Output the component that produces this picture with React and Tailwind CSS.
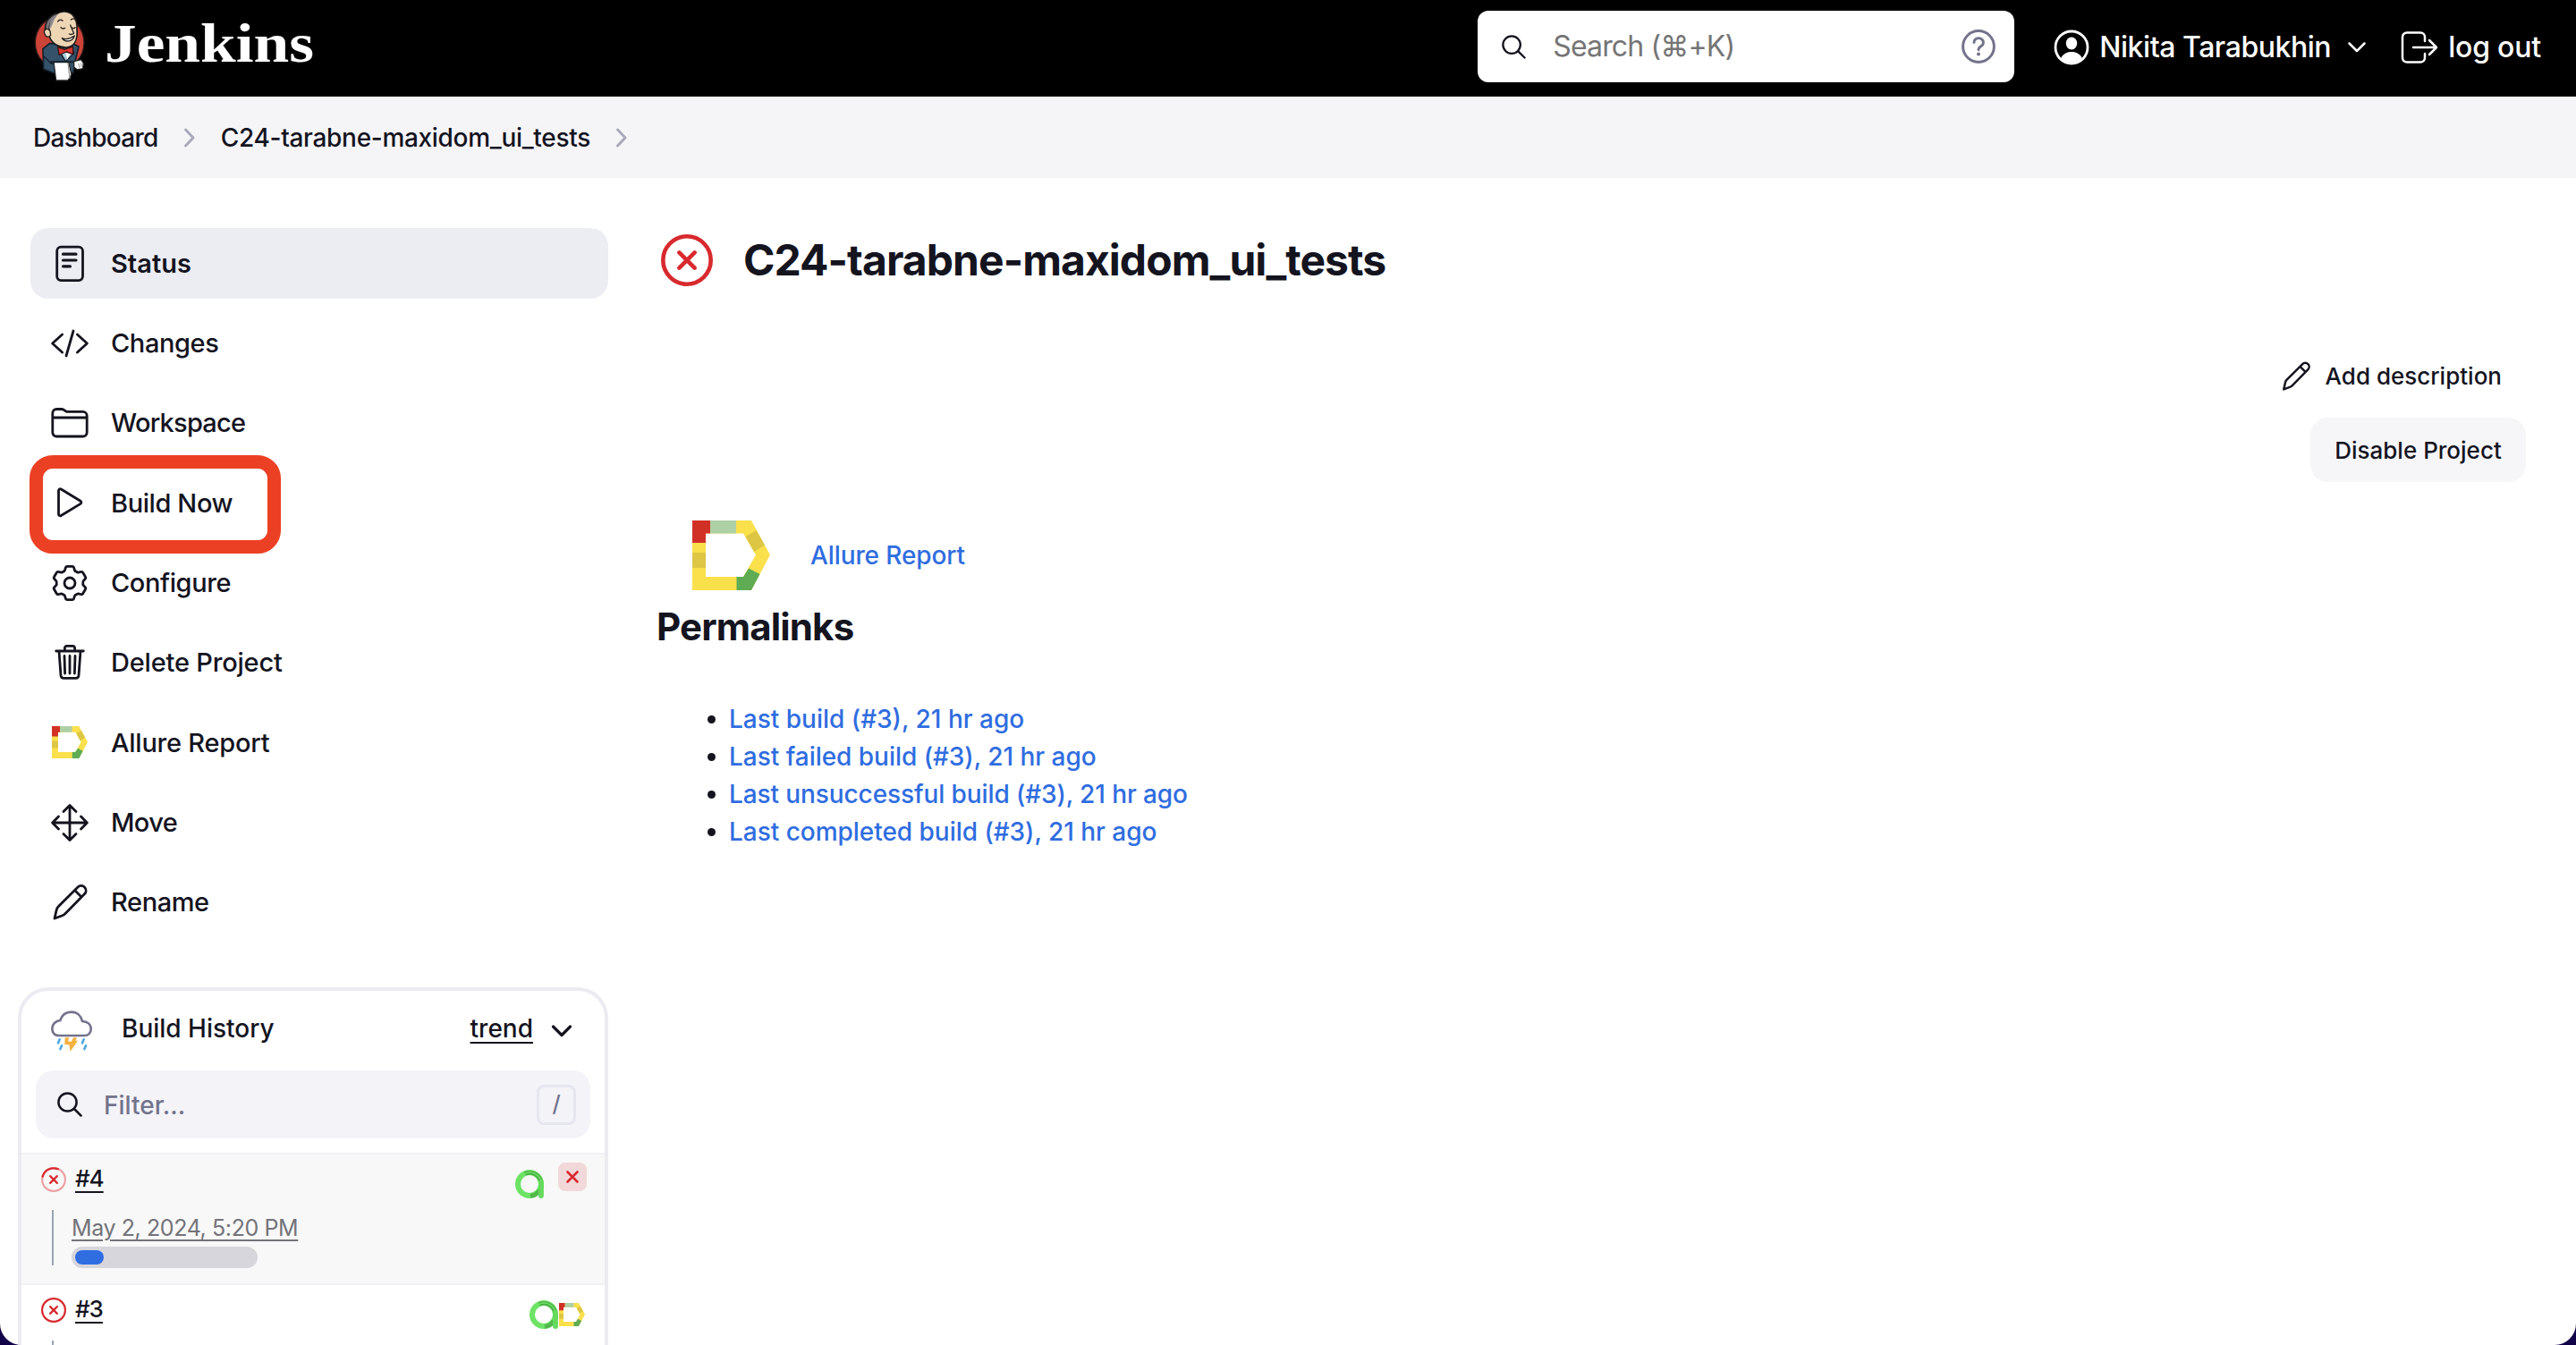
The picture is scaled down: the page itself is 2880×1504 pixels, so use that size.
import React from "react";

function Svg({ w, h, box, children, className = "" }) {
  return (
    <svg
      width={w}
      height={h}
      viewBox={box || `0 0 ${w} ${h}`}
      fill="none"
      stroke="currentColor"
      strokeWidth="2.8"
      strokeLinecap="round"
      strokeLinejoin="round"
      className={`block shrink-0 ${className}`}
    >
      {children}
    </svg>
  );
}

function Butler() {
  return (
    <svg width="100" height="100" viewBox="0 0 300 300" className="block shrink-0" strokeLinejoin="round" strokeLinecap="round">
      <ellipse cx="140" cy="143" rx="82" ry="88" fill="#cc4338" stroke="#2a1a1a" strokeWidth="4" />
      <path d="M106 146 L84 164 L86 232 L122 246 L186 244 L192 206 L204 156 L186 148 Z" fill="#34536b" stroke="#15202a" strokeWidth="5" />
      <path d="M88 190 L112 214 L130 208" fill="none" stroke="#15202a" strokeWidth="4" />
      <path d="M140 172 L160 206 L188 178 L180 158 Z" fill="#a9cbdc" stroke="#15202a" strokeWidth="4" />
      <path d="M160 176 L166 200 L176 176 Z" fill="#fff" />
      <path d="M94 112 C86 84 98 58 128 44 L134 60 L112 92 L108 118 Z" fill="#77757a" stroke="#1c1c1c" strokeWidth="5" />
      <path d="M104 118 C102 74 124 38 156 39 C186 40 200 66 198 98 C201 132 190 156 164 159 C138 160 112 146 106 122 Z" fill="#eed6b5" stroke="#1c1c1c" strokeWidth="5" />
      <path d="M108 74 C112 58 122 50 134 47 L122 66 L112 90 L104 98 Z" fill="#8a878a" />
      <path d="M108 104 C98 90 84 100 90 114 C94 126 104 126 110 118 Z" fill="#eed6b5" stroke="#1c1c1c" strokeWidth="4" />
      <path d="M134 72 Q142 62 150 70 M178 66 Q188 58 194 68 M144 92 Q150 99 158 94 M180 92 Q186 98 192 92 M176 84 Q184 104 188 112 Q180 118 172 114" fill="none" stroke="#2b2320" strokeWidth="4" />
      <path d="M148 128 Q168 136 190 120 Q184 138 166 138 Q154 138 148 128 Z" fill="#fff" stroke="#2b2320" strokeWidth="4" />
      <path d="M134 158 L156 166 L184 156 L186 182 L162 174 L138 184 Z" fill="#d8342f" stroke="#3a1212" strokeWidth="4" />
      <path d="M120 208 L170 208 L180 250 L168 270 L128 270 Z" fill="#fff" stroke="#222" strokeWidth="4" />
      <path d="M168 210 L174 262" stroke="#999" strokeWidth="4" />
      <path d="M112 208 L184 208" stroke="#15202a" strokeWidth="6" />
      <path d="M188 206 L212 200 L220 212 L218 230 L200 234 L188 226 Z" fill="#fff" stroke="#222" strokeWidth="4" />
      <path d="M204 214 L206 226 M212 212 L213 224" stroke="#999" strokeWidth="3" />
    </svg>
  );
}

function AllureD({ w, h }) {
  return (
    <svg width={w} height={h} viewBox="0 0 87 78" preserveAspectRatio="none" className="block shrink-0">
      <path d="M0 0 H66 L87 38.5 L66 78 H0 Z M15 14.5 V63 H57 L71 38.5 L57 14.5 Z" fill="#fae04b" fillRule="evenodd" />
      <path d="M0 0 H20 V14.5 H15 V25 H0 Z" fill="#d13027" />
      <path d="M20 0 H49 V14.5 H20 Z" fill="#aed0a6" />
      <path d="M0 36 H15 V53 H0 Z M59.5 18 L71.5 11 L81 27.5 L69 35 Z" fill="#dec645" />
      <path d="M49.5 63 H57 L63 53.5 L75.5 60 L66 78 H49.5 Z" fill="#5fac55" />
    </svg>
  );
}

function AllureA() {
  return (
    <svg width="32" height="32" viewBox="0 0 32 32" fill="none" className="block shrink-0">
      <circle cx="16" cy="16" r="13" stroke="#6de365" strokeWidth="6" />
      <path d="M11 4.5 A13 13 0 0 1 28.4 12" stroke="#4aab45" strokeWidth="4.4" />
      <path d="M17 29.4 A13 13 0 0 0 27 23" stroke="#51b84b" strokeWidth="4.6" />
      <path d="M9 5.6 A12.6 12.6 0 0 1 29 16" stroke="#6de365" strokeWidth="1.6" />
      <path d="M29 14 V29" stroke="#65da5d" strokeWidth="5.8" strokeLinecap="round" />
    </svg>
  );
}

const polar = (r, deg) => {
  const a = (deg * Math.PI) / 180;
  return `${(24 + r * Math.cos(a)).toFixed(2)} ${(24 + r * Math.sin(a)).toFixed(2)}`;
};
// Six flat teeth joined by shallow rounded notches.
const gearPath =
  [0, 1, 2, 3, 4, 5]
    .map((k) => {
      const c = -90 + k * 60;
      return `${k ? "L" : "M"}${polar(17.4, c - 16)} Q${polar(19.2, c - 13)} ${polar(18.8, c - 8)} L${polar(18.8, c + 8)} Q${polar(19.2, c + 13)} ${polar(17.4, c + 16)} L${polar(16, c + 19)} Q${polar(14.2, c + 24)} ${polar(14.8, c + 30)} Q${polar(14.2, c + 36)} ${polar(16, c + 41)}`;
    })
    .join(" ") + "Z";

const icons = {
  status: (
    <Svg w={48} h={48}>
      <rect x="9.7" y="5.2" width="28.8" height="37.4" rx="4.5" />
      <path d="M16.5 13.2 H31 M16.5 20 H31 M16.5 26.8 H24.5" strokeWidth="3.2" />
    </Svg>
  ),
  changes: (
    <Svg w={48} h={48}>
      <path d="M15.6 14 L4.6 24 L15.6 34 M32.4 14 L43.4 24 L32.4 34 M28 10 L20 38" />
    </Svg>
  ),
  workspace: (
    <Svg w={48} h={48}>
      <path d="M4.8 13 a4.5 4.5 0 0 1 4.5-4.5 H14.6 a5 5 0 0 1 3 1 l1.8 1.2 a5 5 0 0 0 2.6 .7 H38.7 a4.5 4.5 0 0 1 4.5 4.5 V34.5 a4.5 4.5 0 0 1-4.5 4.5 H9.3 a4.5 4.5 0 0 1-4.5-4.5 Z M4.8 18 H43.2" />
    </Svg>
  ),
  build: (
    <Svg w={48} h={48}>
      <path d="M11.5 10.5 V37 a1.8 1.8 0 0 0 2.8 1.5 L36 25.4 a1.9 1.9 0 0 0 0-3.2 L14.3 9 a1.8 1.8 0 0 0-2.8 1.5 Z" />
    </Svg>
  ),
  configure: (
    <Svg w={48} h={48}>
      <path d={gearPath} />
      <circle cx="24" cy="24" r="6" />
    </Svg>
  ),
  trash: (
    <Svg w={48} h={48}>
      <path d="M12 11 L14 38.4 a3.4 3.4 0 0 0 3.3 3 H30.7 a3.4 3.4 0 0 0 3.3-3 L36 11 M8.7 11 H39.3 M18.4 11 V7.6 a2.2 2.2 0 0 1 2.2-2.2 H27.4 a2.2 2.2 0 0 1 2.2 2.2 V11 M24 16.5 V36 M18 16.5 L18.6 36 M30 16.5 L29.4 36" />
    </Svg>
  ),
  allure: (
    <div className="flex h-12 w-12 items-center pl-1">
      <AllureD w={40} h={36} />
    </div>
  ),
  move: (
    <Svg w={48} h={48}>
      <path d="M24 5 V43 M5 24 H43 M17 11.5 L24 4.6 L31 11.5 M17 36.5 L24 43.4 L31 36.5 M11.5 17 L4.6 24 L11.5 31 M36.5 17 L43.4 24 L36.5 31" />
    </Svg>
  ),
  pencil: (
    <Svg w={48} h={48}>
      <path d="M7 42 L9.2 32.4 a8 8 0 0 1 2-3.6 L33 7 a5.3 5.3 0 0 1 7.5 0 L40.6 7.2 a5.3 5.3 0 0 1 0 7.4 L18.8 36.8 a8 8 0 0 1-3.6 2.2 Z M29.6 10.6 L37 18" />
    </Svg>
  ),
};

const nav = [
  ["status", "Status", "font-semibold bg-[#ecedf3]"],
  ["changes", "Changes", "font-medium tracking-[-0.4px]"],
  ["workspace", "Workspace", "font-medium tracking-[-0.75px]"],
  ["build", "Build Now", "font-medium tracking-[-0.4px]"],
  ["configure", "Configure", "font-medium tracking-[-0.4px]"],
  ["trash", "Delete Project", "font-medium tracking-[-0.2px]"],
  ["allure", "Allure Report", "font-medium tracking-[-0.25px]"],
  ["move", "Move", "font-medium tracking-[-0.6px]"],
  ["pencil", "Rename", "font-medium tracking-[-0.4px]"],
];

function Search({ size, sw }) {
  return (
    <Svg w={size} h={size} box="0 0 28 28">
      <g strokeWidth={sw}>
        <circle cx="11.5" cy="11.5" r="10.1" />
        <path d="M19 19 L26.5 26.5" />
      </g>
    </Svg>
  );
}

function Failed({ size, sw, cross, running }) {
  return (
    <svg width={size} height={size} viewBox="0 0 58 58" fill="none" stroke="#d82a2e" strokeWidth={sw} strokeLinecap="round" className="block shrink-0">
      <circle cx="29" cy="29" r={29 - sw / 2} opacity={running ? 0.42 : 1} />
      {running && <path d="M3.6 22 A26.4 26.4 0 0 1 39 4.7" />}
      <path d={`M${29 - cross} ${29 - cross} L${29 + cross} ${29 + cross} M${29 + cross} ${29 - cross} L${29 - cross} ${29 + cross}`} />
    </svg>
  );
}

function Chevron() {
  return (
    <Svg w={14} h={24} className="text-[#a9a9bb]">
      <path d="M2.5 3 L11 12 L2.5 21" strokeWidth="3" />
    </Svg>
  );
}

function Header() {
  return (
    <header className="flex h-[108px] items-center bg-black pl-5 text-white">
      <div className="-mt-2">
        <Butler />
      </div>
      <span className="-ml-[3px] -mt-3 inline-block origin-left scale-x-[1.17] font-['Liberation_Serif',serif] text-[61px] leading-none font-bold">
        Jenkins
      </span>
      <div className="ml-auto -mt-1 flex h-20 w-[600px] items-center rounded-xl bg-white pl-[27px] pr-5 text-[#14141f]">
        <Search size={27} sw={2.4} />
        <span className="ml-[30px] text-[32px] tracking-[-0.85px] text-[#757575]">Search (⌘+K)</span>
        <Svg w={40} h={40} className="ml-auto text-[#73738c]">
          <circle cx="20" cy="20" r="17.4" strokeWidth="3" />
          <path d="M15 15.5 a5.2 4.8 0 1 1 8 4 c-2 1.3-3 2.2-3 4.2" strokeWidth="2.9" />
          <circle cx="20" cy="28.4" r="2" fill="currentColor" stroke="none" />
        </Svg>
      </div>
      <div className="-mt-0.5 ml-11 flex items-center">
        <Svg w={40} h={40}>
          <circle cx="20" cy="20" r="18" strokeWidth="2.8" />
          <ellipse cx="20" cy="15.5" rx="6.2" ry="7" fill="currentColor" stroke="none" />
          <path d="M8 32.5 C10 27.5 14.5 25 20 25 C25.5 25 30 27.5 32 32.5 A18 18 0 0 1 8 32.5 Z" fill="currentColor" stroke="none" />
        </Svg>
        <span className="ml-[11px] text-[32px] font-medium tracking-[-0.45px]">Nikita Tarabukhin</span>
        <Svg w={22} h={14} className="ml-[18px]">
          <path d="M2.5 2.5 L11 11 L19.5 2.5" strokeWidth="2.5" />
        </Svg>
      </div>
      <div className="-mt-0.5 ml-[37px] mr-[39px] flex items-center">
        <Svg w={44} h={38}>
          <path d="M28 12 V7.5 a5 5 0 0 0-5-5 H8 a5 5 0 0 0-5 5 V30.5 a5 5 0 0 0 5 5 H23 a5 5 0 0 0 5-5 V26 M15 19 H40 M33 11 L41 19 L33 27" strokeWidth="2.5" />
        </Svg>
        <span className="ml-[10px] text-[32px] font-medium tracking-[-0.2px]">log out</span>
      </div>
    </header>
  );
}

function Breadcrumbs() {
  return (
    <nav className="flex h-[91px] items-center bg-[#f5f5f8] pl-[37px] text-[28px] font-medium text-[#14141f]">
      <span className="tracking-[-0.7px]">Dashboard</span>
      <span className="ml-[28px]"><Chevron /></span>
      <span className="ml-[28px] tracking-[-0.31px]">C24-tarabne-maxidom_ui_tests</span>
      <span className="ml-[28px]"><Chevron /></span>
    </nav>
  );
}

function BuildHistory() {
  return (
    <section className="ml-5 h-[460px] w-[660px] overflow-hidden rounded-t-[34px] border-4 border-b-0 border-[#ecebf2] bg-white">
      <div className="flex h-[85px] items-center pl-[32px] pr-[35px] text-[28px] font-medium">
        <svg width="48" height="48" viewBox="48 56 144 144" fill="none" strokeLinecap="round" strokeLinejoin="round" className="mt-1 block shrink-0">
          <path d="M78 143 C62 143 55 132 55 119 C55 105 66 94 82 92 C88 74 102 64 119 64 C138 64 152 76 156 95 C173 96 185 106 185 121 C185 134 176 143 162 143 Z" stroke="#73738c" strokeWidth="8" />
          <path d="M80 156 L75 168 M87 177 L82 188 M161 156 L156 168 M168 177 L163 188" stroke="#4fa9e3" strokeWidth="8" />
          <path d="M98 150 L112 150 L108 162 L119 164 L126 150 L138 150 L133 160 L141 160 L116 196 L112 174 L97 173 Z" fill="#f6b23e" />
        </svg>
        <span className="ml-[32px] -mt-px">Build History</span>
        <span className="ml-auto mr-[19px] -mt-px underline decoration-2 underline-offset-[5px]">trend</span>
        <Svg w={26} h={18} className="mt-1">
          <path d="M3.5 4 L13 13.5 L22.5 4" strokeWidth="3.2" />
        </Svg>
      </div>
      <div className="mx-4 mt-1 flex h-[76px] items-center rounded-[20px] bg-[#f3f3f8] pl-6 pr-4">
        <Search size={28} sw={2.5} />
        <span className="ml-[24px] mt-px text-[28px] font-medium text-[#73738c]">Filter...</span>
        <span className="ml-auto flex h-[45px] w-11 items-center justify-center rounded-lg border-[3px] border-[#e6e6f0] text-[25px] font-medium text-[#73738c]">/</span>
      </div>
      <div className="mt-4 flex h-[146px] border-t-2 border-[#f1f1f7] bg-[#f8f8f8] pl-[22px] pr-5">
        <div className="flex w-[28px] flex-col items-center">
          <span className="mt-[14px]"><Failed size={28} sw={4.6} cross={8} running /></span>
          <span className="mt-[20px] block h-[62px] w-0.5 -ml-0.5 bg-[#9aa5b1]" />
        </div>
        <div className="flex flex-col items-start">
          <span className="ml-[10px] mt-[9px] text-[26px] leading-[36px] font-medium tracking-[-1px] underline decoration-2 underline-offset-[5px]">#4</span>
          <span className="ml-[6px] mt-[18px] text-[25px] leading-[38px] tracking-[-0.4px] text-[#737379] underline decoration-2 underline-offset-[4px]">May 2, 2024, 5:20 PM</span>
          <span className="ml-[6px] mt-[2px] block h-6 w-[208px] rounded-xl bg-[#d7d6dc] p-1">
            <span className="block h-4 w-8 rounded-full bg-[#2f6de0]" />
          </span>
        </div>
        <span className="ml-auto mt-[17px]"><AllureA /></span>
        <span className="ml-4 mt-[9px] flex h-8 w-8 items-center justify-center rounded-lg bg-[#f2d8d9] text-[#d82a2e]">
          <Svg w={14} h={14}><path d="M1.5 1.5 L12.5 12.5 M12.5 1.5 L1.5 12.5" strokeWidth="2.6" /></Svg>
        </span>
      </div>
      <div className="flex h-[146px] border-t-2 border-[#f1f1f7] bg-white pl-[22px] pr-[22px]">
        <div className="flex w-[28px] flex-col items-center">
          <span className="mt-[14px]"><Failed size={28} sw={4.6} cross={8} /></span>
          <span className="mt-[20px] block h-[62px] w-0.5 -ml-0.5 bg-[#9aa5b1]" />
        </div>
        <span className="ml-[10px] mt-[9px] text-[26px] leading-[36px] font-medium tracking-[-1px] underline decoration-2 underline-offset-[5px]">#3</span>
        <span className="ml-auto mt-[17px]"><AllureA /></span>
        <span className="ml-px mt-[20px]"><AllureD w={29} h={26} /></span>
      </div>
    </section>
  );
}

const links = [
  ["Last build (#3), 21 hr ago", ""],
  ["Last failed build (#3), 21 hr ago", "tracking-[-0.03px]"],
  ["Last unsuccessful build (#3), 21 hr ago", "tracking-[-0.1px]"],
  ["Last completed build (#3), 21 hr ago", "tracking-[-0.03px]"],
];

export default function App() {
  return (
    <div className="h-[1504px] w-[2880px] overflow-hidden bg-[#12004a] font-[Inter,sans-serif]">
      <div className="h-full overflow-hidden rounded-b-[24px] bg-white text-[#14141f]">
        <Header />
        <Breadcrumbs />
        <div className="flex">
          <aside className="w-[680px] shrink-0 pt-[56px]">
            <div className="flex h-[849px] flex-col gap-[10.3px] pl-[34px]">
              {nav.map(([icon, label, cls]) => (
                <div key={label} className={`relative flex h-[79px] shrink-0 items-center rounded-[20px] pl-5 text-[29px] ${cls}`}>
                  {icons[icon]}
                  <span className="ml-[22px]">{label}</span>
                  {icon === "build" && (
                    <span className="absolute -left-px -top-[14px] h-[110px] w-[281px] rounded-[26px] border-[15px] border-[#ec4025]" />
                  )}
                </div>
              ))}
            </div>
            <BuildHistory />
          </aside>
          <main className="flex flex-1 flex-col pl-[59px] pt-[63px]">
            <div className="flex h-[58px] items-center">
              <Failed size={58} sw={4.6} cross={8.6} />
              <h1 className="ml-[34px] text-[48px] leading-none font-bold tracking-[-0.95px]">C24-tarabne-maxidom_ui_tests</h1>
            </div>
            <div className="mt-20 flex h-10 items-center justify-end pr-[83px] text-[26px] font-medium">
              <Svg w={34} h={34} box="3 2 42 42"><g strokeWidth="3">{icons.pencil.props.children}</g></Svg>
              <span className="ml-[16px]">Add description</span>
            </div>
            <button className="mr-14 mt-[27px] h-[72px] w-[241px] self-end rounded-[20px] bg-[#f6f6f9] text-[26px] font-medium">
              Disable Project
            </button>
            <div className="mt-[43px] flex h-[78px] items-center pl-[35px]">
              <AllureD w={87} h={78} />
              <span className="ml-[45px] text-[28px] font-medium tracking-[-0.1px] text-[#2f6de0]">Allure Report</span>
            </div>
            <h2 className="-ml-[5px] mt-5 text-[42px] leading-[42px] font-bold tracking-[-0.85px]">Permalinks</h2>
            <ul className="mt-[61px] text-[28px] leading-[42px] font-medium text-[#2f6de0]">
              {links.map(([t, cls]) => (
                <li key={t} className={`flex items-center pl-[52px] ${cls}`}>
                  <span className="mr-[15px] h-[9px] w-[9px] rounded-full bg-[#14141f]" />
                  {t}
                </li>
              ))}
            </ul>
          </main>
        </div>
      </div>
    </div>
  );
}
